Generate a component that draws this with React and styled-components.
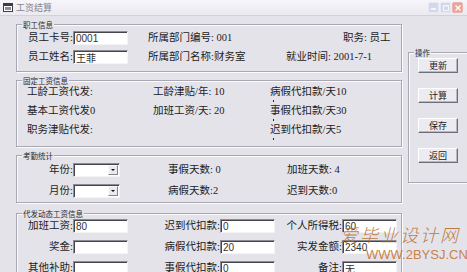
import React from 'react';
import styled, { createGlobalStyle } from 'styled-components';

const GlobalStyle = createGlobalStyle`
  body {
    margin: 0;
  }
`;

const BG = '#e4e3ea';

const Window = styled.div`
  position: relative;
  width: 467px;
  height: 272px;
  overflow: hidden;
  background: ${BG};
  font-family: 'Liberation Serif', 'Noto Sans CJK SC', serif;
  font-size: 10.5px;
  color: #1c1c1c;
`;

const TitleBar = styled.div`
  display: flex;
  align-items: center;
  height: 15px;
  padding-left: 3px;
  background: linear-gradient(#f6f5f9, #eceaf1);
  border-bottom: 1px solid #d2d0d8;
`;

const TitleText = styled.span`
  margin-left: 3px;
  font-family: 'Noto Sans CJK SC', sans-serif;
  font-size: 9px;
  color: #85848f;
`;

const CaptionButtons = styled.div`
  display: flex;
  gap: 1px;
  margin-left: auto;
  margin-right: 4px;
`;

const CaptionButton = styled.div`
  display: flex;
  align-items: center;
  justify-content: center;
  width: 11px;
  height: 11px;
  border-radius: 2px;
  background: ${({ $close }) => ($close ? '#eba49a' : '#d3d9ea')};
  border: 1px solid ${({ $close }) => ($close ? '#e7b3ac' : '#e6e9f2')};
  box-sizing: border-box;
`;

const Content = styled.div`
  display: flex;
  align-items: flex-start;
  gap: 6px;
  padding-left: 16px;
`;

const LeftColumn = styled.div`
  display: flex;
  flex-direction: column;
  width: 386px;
  flex-shrink: 0;
`;

const GroupBox = styled.div`
  position: relative;
  box-sizing: border-box;
  height: ${({ $h }) => $h}px;
  margin-top: ${({ $mt }) => $mt}px;
  border: 1px solid #a9a7b2;
  box-shadow: inset 1px 1px 0 #fbfbfd, 1px 1px 0 #fbfbfd;
`;

const Legend = styled.span`
  position: absolute;
  top: -5px;
  left: 5px;
  padding: 0 1px;
  background: ${BG};
  font-family: 'Noto Sans CJK SC', sans-serif;
  font-size: 7.5px;
  line-height: 9px;
  color: #2a2a2a;
`;

const Rows = styled.div`
  display: flex;
  flex-direction: column;
  gap: ${({ $gap }) => $gap}px;
  padding-top: ${({ $pt }) => $pt}px;
`;

const Row = styled.div`
  display: flex;
  align-items: center;
  height: 14px;
`;

const FieldLabel = styled.span`
  flex-shrink: 0;
  width: ${({ $w }) => $w}px;
  text-align: right;
  line-height: 14px;
  white-space: nowrap;
`;

const Text = styled.span`
  flex-shrink: 0;
  width: ${({ $w }) => ($w ? `${$w}px` : 'auto')};
  margin-left: ${({ $ml }) => $ml || 0}px;
  line-height: 14px;
  white-space: nowrap;
`;

const TextBox = styled.input`
  flex-shrink: 0;
  box-sizing: border-box;
  width: 55px;
  height: 14px;
  margin: 0;
  padding: 0 2px;
  background: #fff;
  border: 1px solid;
  border-color: #8d8b94 #f4f4f7 #f4f4f7 #8d8b94;
  box-shadow: inset 1px 1px 0 #46454c;
  font-family: 'Liberation Sans', 'Noto Sans CJK SC', sans-serif;
  font-size: 10px;
  color: #333;
  outline: none;
`;

const Combo = styled.div`
  display: flex;
  justify-content: flex-end;
  box-sizing: border-box;
  width: 47px;
  height: 14px;
  padding: 1px;
  background: #fff;
  border: 1px solid;
  border-color: #8d8b94 #f4f4f7 #f4f4f7 #8d8b94;
  box-shadow: inset 1px 1px 0 #46454c;
`;

const DropButton = styled.div`
  display: flex;
  align-items: center;
  justify-content: center;
  box-sizing: border-box;
  width: 10px;
  height: 100%;
  background: #eceaf0;
  border: 1px solid;
  border-color: #fafafc #85838c #85838c #fafafc;

  &::after {
    content: '';
    border-left: 2px solid transparent;
    border-right: 2px solid transparent;
    border-top: 2px solid #111;
  }
`;

const FixedGrid = styled.div`
  display: grid;
  grid-template-columns: 126px 117px 1fr;
  grid-auto-rows: 19px;
  padding: 4px 0 0 10px;
`;

const Cell = styled.div`
  display: flex;
  flex-direction: column;
  line-height: 14px;
  white-space: nowrap;
`;

const Dot = styled.span`
  width: 1px;
  height: 2px;
  margin-left: 3px;
  margin-top: 1px;
  background: #222;
`;

const RightGroup = styled(GroupBox)`
  width: 62px;
  flex-shrink: 0;
`;

const ButtonStack = styled.div`
  display: flex;
  flex-direction: column;
  gap: 15px;
  padding: 5px 0 0 9px;
`;

const Button = styled.div`
  box-sizing: border-box;
  width: 40px;
  height: 15px;
  display: flex;
  align-items: center;
  justify-content: center;
  background: #ecebf1;
  border: 1px solid;
  border-color: #ffffff #6f6d76 #6f6d76 #ffffff;
  box-shadow: inset -1px -1px 0 #b9b7c0;
  font-family: 'Noto Sans CJK SC', sans-serif;
  font-size: 9px;
  color: #1a1a1a;
`;

const WatermarkTitle = styled.div`
  position: absolute;
  left: 340px;
  top: 223px;
  font-family: 'Noto Sans CJK SC', sans-serif;
  font-size: 18px;
  font-weight: 300;
  letter-spacing: 2px;
  line-height: 22px;
  color: rgba(178, 104, 34, 0.85);
  font-style: italic;
`;

const WatermarkUrl = styled.div`
  position: absolute;
  left: 366px;
  top: 247px;
  font-family: 'Liberation Sans', sans-serif;
  font-size: 13px;
  line-height: 15px;
  color: rgba(196, 118, 50, 0.9);
`;

const WindowIcon = () => (
  <svg width="10" height="9" viewBox="0 0 10 9">
    <rect x="0.5" y="0.5" width="9" height="8" fill="#fff" stroke="#3d3d45" />
    <rect x="0.5" y="0.5" width="9" height="2.5" fill="#3d3d45" />
    <rect x="2" y="4" width="6" height="3" fill="#8e8e99" />
  </svg>
);

const App = () => (
  <Window>
    <GlobalStyle />
    <TitleBar>
      <WindowIcon />
      <TitleText>工资结算</TitleText>
      <CaptionButtons>
        <CaptionButton>
          <svg width="5" height="5" viewBox="0 0 5 5">
            <rect x="0" y="3" width="5" height="2" fill="#f4f6fb" />
          </svg>
        </CaptionButton>
        <CaptionButton>
          <svg width="6" height="6" viewBox="0 0 6 6">
            <rect x="0.5" y="0.5" width="5" height="5" fill="none" stroke="#f4f6fb" />
            <rect x="0" y="0" width="6" height="1.5" fill="#f4f6fb" />
          </svg>
        </CaptionButton>
        <CaptionButton $close>
          <svg width="6" height="6" viewBox="0 0 6 6">
            <path d="M0.5 0.5 L5.5 5.5 M5.5 0.5 L0.5 5.5" stroke="#fff" strokeWidth="1.4" />
          </svg>
        </CaptionButton>
      </CaptionButtons>
    </TitleBar>

    <Content>
      <LeftColumn>
        <GroupBox $h={48} $mt={8}>
          <Legend>职工信息</Legend>
          <Rows $gap={5} $pt={6}>
            <Row>
              <FieldLabel $w={56}>员工卡号:</FieldLabel>
              <TextBox readOnly defaultValue="0001" />
              <Text $ml={20} $w={195}>所属部门编号: 001</Text>
              <Text>职务: 员工</Text>
            </Row>
            <Row>
              <FieldLabel $w={56}>员工姓名:</FieldLabel>
              <TextBox readOnly defaultValue="王菲" />
              <Text $ml={20} $w={138}>所属部门名称:财务室</Text>
              <Text>就业时间: 2001-7-1</Text>
            </Row>
          </Rows>
        </GroupBox>

        <GroupBox $h={67} $mt={8}>
          <Legend>固定工资信息</Legend>
          <FixedGrid>
            <Cell>工龄工资代发:</Cell>
            <Cell>工龄津贴/年: 10</Cell>
            <Cell>
              病假代扣款/天10
              <Dot />
            </Cell>
            <Cell>基本工资代发0</Cell>
            <Cell>加班工资/天: 20</Cell>
            <Cell>
              事假代扣款/天30
              <Dot />
            </Cell>
            <Cell>职务津贴代发:</Cell>
            <Cell />
            <Cell>
              迟到代扣款/天5
              <Dot />
            </Cell>
          </FixedGrid>
        </GroupBox>

        <GroupBox $h={48} $mt={8}>
          <Legend>考勤统计</Legend>
          <Rows $gap={7} $pt={7}>
            <Row>
              <FieldLabel $w={56}>年份:</FieldLabel>
              <Combo>
                <DropButton />
              </Combo>
              <Text $ml={48} $w={119}>事假天数: 0</Text>
              <Text>加班天数: 4</Text>
            </Row>
            <Row>
              <FieldLabel $w={56}>月份:</FieldLabel>
              <Combo>
                <DropButton />
              </Combo>
              <Text $ml={48} $w={119}>病假天数:2</Text>
              <Text>迟到天数:0</Text>
            </Row>
          </Rows>
        </GroupBox>

        <GroupBox $h={70} $mt={10}>
          <Legend>代发动态工资信息</Legend>
          <Rows $gap={7} $pt={5}>
            <Row>
              <FieldLabel $w={56}>加班工资:</FieldLabel>
              <TextBox readOnly defaultValue="80" />
              <FieldLabel $w={92}>迟到代扣款:</FieldLabel>
              <TextBox readOnly defaultValue="0" />
              <FieldLabel $w={67}>个人所得税:</FieldLabel>
              <TextBox readOnly defaultValue="60" />
            </Row>
            <Row>
              <FieldLabel $w={56}>奖金:</FieldLabel>
              <TextBox readOnly defaultValue="" />
              <FieldLabel $w={92}>病假代扣款:</FieldLabel>
              <TextBox readOnly defaultValue="20" />
              <FieldLabel $w={67}>实发金额:</FieldLabel>
              <TextBox readOnly defaultValue="2340" />
            </Row>
            <Row>
              <FieldLabel $w={56}>其他补助:</FieldLabel>
              <TextBox readOnly defaultValue="" />
              <FieldLabel $w={92}>事假代扣款:</FieldLabel>
              <TextBox readOnly defaultValue="0" />
              <FieldLabel $w={67}>备注:</FieldLabel>
              <TextBox readOnly defaultValue="无" />
            </Row>
          </Rows>
        </GroupBox>
      </LeftColumn>

      <RightGroup $h={131} $mt={36}>
        <Legend>操作</Legend>
        <ButtonStack>
          <Button>更新</Button>
          <Button>计算</Button>
          <Button>保存</Button>
          <Button>返回</Button>
        </ButtonStack>
      </RightGroup>
    </Content>

    <WatermarkTitle>爱毕业设计网</WatermarkTitle>
    <WatermarkUrl>WWW.2BYSJ.CN</WatermarkUrl>
  </Window>
);

export default App;
